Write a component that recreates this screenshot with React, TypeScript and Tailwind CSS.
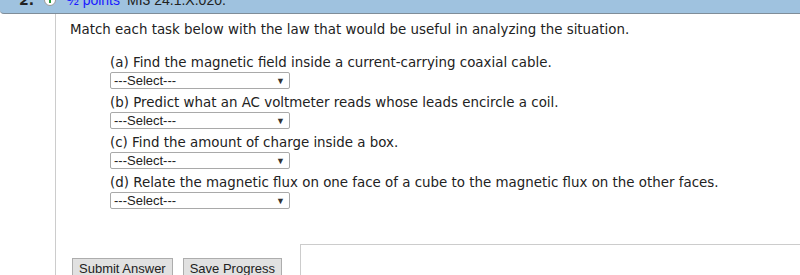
import React from "react";

const tasks = [
  "(a) Find the magnetic field inside a current-carrying coaxial cable.",
  "(b) Predict what an AC voltmeter reads whose leads encircle a coil.",
  "(c) Find the amount of charge inside a box.",
  "(d) Relate the magnetic flux on one face of a cube to the magnetic flux on the other faces.",
];

function SelectBox() {
  return (
    <div className="relative w-[180px] h-[17px] border border-[#a9a9a9] rounded-[2px] bg-white flex items-center pl-[3px] text-[13px] text-[#222] font-['Liberation_Sans',Arial,sans-serif]">
      <span>---Select---</span>
      <span className="absolute right-[4px] top-[2px] text-[9px] text-[#333]">▼</span>
    </div>
  );
}

export default function App() {
  return (
    <div className="w-[800px] h-[275px] overflow-hidden bg-white font-['DejaVu_Sans',Verdana,sans-serif]">
      {/* question header */}
      <div className="h-[14px] bg-[#9fc2df] border-b border-[#7f8d99] rounded-bl-[4px] overflow-hidden">
        <div className="flex items-center h-[20px] -mt-[10px] text-[14px]">
          <span className="ml-[19px] font-bold text-[#222]">2.</span>
          <span className="ml-[10px] w-[12px] h-[12px] rounded-full bg-white border border-[#999] flex items-end justify-center">
            <span className="w-[2px] h-[4px] bg-[#2a9a3a] mb-[2px]" />
          </span>
          <span className="ml-[11px] text-[#1a1aff] font-['Liberation_Sans',Arial,sans-serif]">½ points</span>
          <span className="ml-[7px] text-[#222] font-['Liberation_Sans',Arial,sans-serif]">MI3 24.1.X.020.</span>
        </div>
      </div>

      <div className="flex h-[261px]">
        <div className="w-[56px] border-r border-[#cccccc] shrink-0" />
        <div className="flex-1 flex flex-col">
          <p className="ml-[14px] mt-[7px] text-[13.4px] leading-[17px] text-[#222]">
            Match each task below with the law that would be useful in analyzing the situation.
          </p>

          <div className="ml-[54px] mt-[15px] flex flex-col">
            {tasks.map((t) => (
              <div key={t} className="flex flex-col">
                <span className="text-[13.4px] leading-[19px] text-[#222]">{t}</span>
                <SelectBox />
                <div className="h-[4px]" />
              </div>
            ))}
          </div>

          <div className="flex items-start mt-[31px]">
            <div className="flex gap-[10px] ml-[16px] mt-[14px] font-['Liberation_Sans',Arial,sans-serif]">
              <button className="h-[22px] px-[6px] bg-[#e1e1e1] border border-[#adadad] text-[13px] text-[#222] leading-[20px]">
                Submit Answer
              </button>
              <button className="h-[22px] px-[6px] bg-[#e1e1e1] border border-[#adadad] text-[13px] text-[#222] leading-[20px]">
                Save Progress
              </button>
            </div>
            <div className="ml-[18px] flex-1 h-[40px] border-l border-t border-[#cccccc]" />
          </div>
        </div>
      </div>
    </div>
  );
}
